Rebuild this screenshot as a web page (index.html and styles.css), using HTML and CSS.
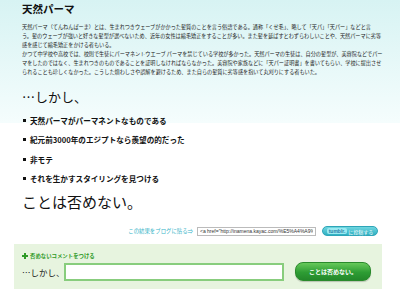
FILE: index.html
```html
<!DOCTYPE html>
<html>
  <head>
    <meta charset="utf-8">
    <title>天然パーマ</title>
    <link rel="stylesheet" href="styles.css">
  </head>
  <body>
    <div class="page">
      <div class="intro">
        <h1 class="title">天然パーマ</h1>
        <p class="desc">天然パーマ（てんねんぱーま）とは、生まれつきウェーブがかかった髪質のことを言う俗語である。通称「くせ毛」、略して「天パ」「天パー」などと言<br>う。髪のウェーブが強いと好きな髪型が選べないため、近年の女性は縮毛矯正をすることが多い。また髪を延ばすとわずらわしいことや、天然パーマに劣等<br>感を感じて縮毛矯正をかける者もいる。<br>かつて中学校や高校では、校則で生徒にパーマネントウエーブ パーマを禁じている学校が多かった。天然パーマの生徒は、自分の髪型が、美容院などでパー<br>マをしたのではなく、生まれつきのものであることを証明しなければならなかった。美容院や家族などに「天パー証明書」を書いてもらい、学校に提出させ<br>られることも珍しくなかった。こうした煩わしさや誤解を避けるため、また自らの髪質に劣等感を抱いて丸刈りにする者もいた。</p>
        <p class="but">…しかし、</p>
        <ul class="reasons">
          <li>天然パーマがパーマネントなものである</li>
          <li>紀元前3000年のエジプトなら羨望の的だった</li>
          <li>非モテ</li>
          <li>それを生かすスタイリングを見つける</li>
        </ul>
        <p class="conclusion">ことは否めない。</p>
      </div>

      <div class="share">
        <a class="share-link" href="#">この結果をブログに貼る⇒</a>
        <input class="share-code" type="text" value='&lt;a href="http://inamena.kayac.com/%E5%A4%A9%E7%84%B6' readonly>
        <a class="tumblr" href="#"><span class="tumblr-logo">tumblr.</span>に投稿する</a>
      </div>

      <div class="comment">
        <div class="comment-head">
          <svg class="plus" width="6" height="6" viewBox="0 0 6 6"><path d="M2 0h2v2h2v2H4v2H2V4H0V2h2z" fill="#2f9a27"/></svg>
          <span>否めないコメントをつける</span>
        </div>
        <div class="comment-row">
          <span class="comment-label">…しかし、</span>
          <input class="comment-input" type="text">
          <button class="comment-btn">ことは否めない。</button>
        </div>
      </div>
    </div>
  </body>
</html>
```

FILE: styles.css
```css
*{
  margin: 0;
  padding: 0;
  box-sizing: border-box;
}
body{
  font-family: "Noto Sans CJK JP", "Noto Sans", sans-serif;
  color: #111;
  background: #fff linear-gradient(#d7f3f3 0, #f5fdfd 123px, #fff 123px) no-repeat;
  background-size: 100% 123px;
}
.page{
  width: 368px;
  margin-left: 14px;
}
.intro{
  padding-left: 8px;
}
.title{
  font-size: 10.5px;
  line-height: 14px;
  padding-top: 2px;
  font-weight: bold;
}
.desc{
  margin-top: 6px;
  font-size: 5.15px;
  line-height: 9px;
  white-space: nowrap;
  color: #222;
}
.but{
  margin-top: 13px;
  font-size: 13px;
  line-height: 16px;
}
.reasons{
  list-style: none;
  margin-top: 6px;
}
.reasons li{
  font-size: 7.6px;
  line-height: 19.3px;
  font-weight: bold;
  display: flex;
  align-items: center;
}
.reasons li:before{
  content: "";
  width: 3px;
  height: 3px;
  background: #111;
  margin: 0 4px 0 1px;
}
.conclusion{
  margin-top: 5px;
  font-size: 15px;
  line-height: 18px;
}
.share{
  margin-top: 15px;
  display: flex;
  justify-content: flex-end;
  align-items: center;
  padding-right: 4px;
  height: 10px;
}
.share-link{
  color: #35b4c8;
  font-size: 5.4px;
  text-decoration: none;
  margin-right: 4px;
}
.share-code{
  width: 119px;
  height: 9px;
  border: 1px solid #bbb;
  font-family: "Liberation Sans", sans-serif;
  font-size: 5px;
  padding: 0 2px;
  color: #333;
  outline: none;
}
.tumblr{
  margin-left: 6px;
  width: 56px;
  height: 10px;
  border-radius: 5px;
  background: linear-gradient(#6fd6e0, #2fb0c2);
  border: 1px solid #2ea5b8;
  color: #fff;
  font-size: 5px;
  text-decoration: none;
  display: flex;
  align-items: center;
  justify-content: center;
  gap: 1px;
}
.tumblr-logo{
  background: #9aeaf2;
  color: #2a7fa8;
  font-family: "Liberation Sans", sans-serif;
  font-weight: bold;
  font-size: 5px;
  line-height: 6px;
  padding: 0 2px;
  border-radius: 2px;
}
.comment{
  margin-top: 8px;
  height: 45px;
  background: #e7f4df;
  padding: 7px 8px 0;
}
.comment-head{
  display: flex;
  align-items: center;
  gap: 2px;
  height: 9px;
  color: #2f9a27;
  font-size: 5.4px;
  font-weight: bold;
}
.comment-row{
  margin-top: 2px;
  display: flex;
  align-items: center;
}
.comment-label{
  font-size: 8.5px;
  width: 42px;
  flex-shrink: 0;
  white-space: nowrap;
}
.comment-input{
  width: 220px;
  height: 18px;
  border: 2px solid #88cd7d;
  background: #fff;
  outline: none;
}
.comment-btn{
  margin-left: 11px;
  width: 76px;
  height: 19px;
  border: 1px solid #2a8a2c;
  border-radius: 8px;
  background: linear-gradient(#66c95a, #2e9d34 55%, #23882a);
  color: #fff;
  font-family: "Noto Sans CJK JP", sans-serif;
  font-size: 6px;
  font-weight: bold;
  box-shadow: 0 1px 1px rgba(0,0,0,0.2);
}
```
